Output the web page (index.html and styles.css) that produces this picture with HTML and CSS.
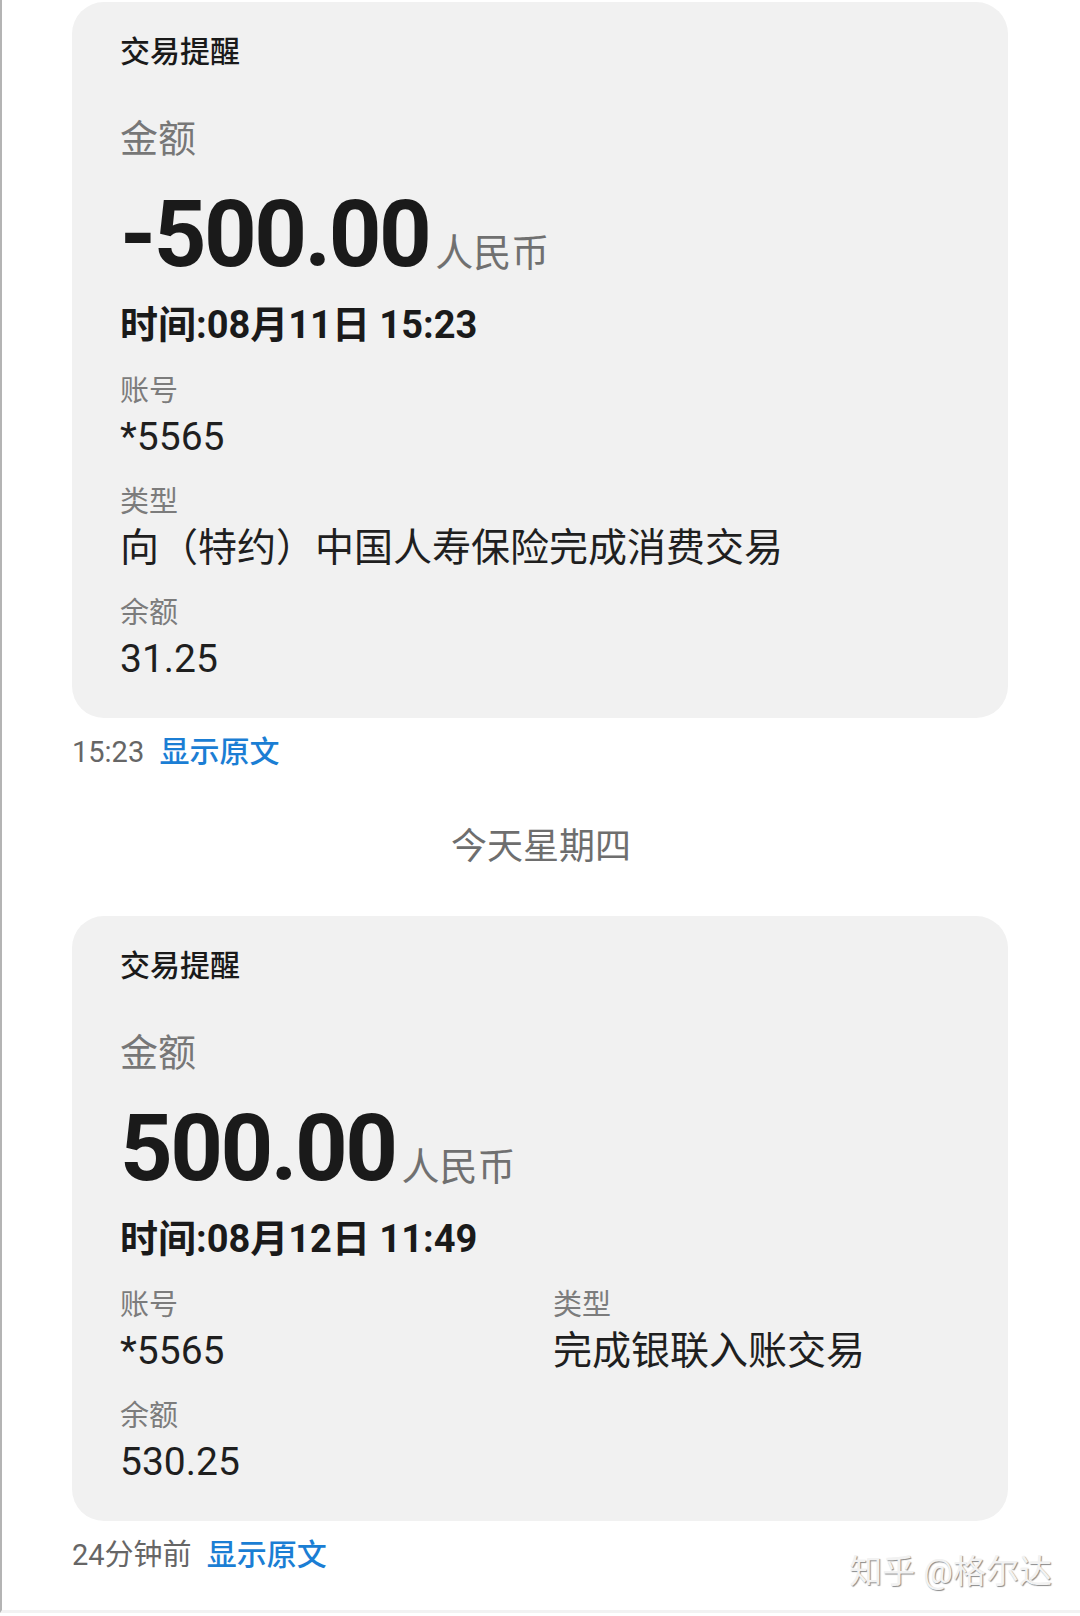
FILE: index.html
```html
<!DOCTYPE html>
<html lang="zh-CN">
<head>
    <meta charset="UTF-8">
    <meta name="viewport" content="width=device-width, initial-scale=1.0">
    <title>交易提醒</title>
    <link rel="stylesheet" href="styles.css">
</head>
<body>
    <div class="page">
        <div class="card">
            <div class="card-title">交易提醒</div>
            <div class="amount-label">金额</div>
            <div class="amount"><span class="num">-500.00</span><span class="cur">人民币</span></div>
            <div class="time">时间:08月11日 15:23</div>
            <div class="field">
                <div class="label">账号</div>
                <div class="value">*5565</div>
            </div>
            <div class="field">
                <div class="label">类型</div>
                <div class="value">向（特约）中国人寿保险完成消费交易</div>
            </div>
            <div class="field">
                <div class="label">余额</div>
                <div class="value">31.25</div>
            </div>
        </div>
        <div class="meta">
            <span class="meta-time">15:23</span>
            <a class="meta-link" href="#">显示原文</a>
        </div>

        <div class="day">今天星期四</div>

        <div class="card">
            <div class="card-title">交易提醒</div>
            <div class="amount-label">金额</div>
            <div class="amount"><span class="num">500.00</span><span class="cur">人民币</span></div>
            <div class="time">时间:08月12日 11:49</div>
            <div class="field-grid">
                <div class="field">
                    <div class="label">账号</div>
                    <div class="value">*5565</div>
                </div>
                <div class="field">
                    <div class="label">类型</div>
                    <div class="value">完成银联入账交易</div>
                </div>
                <div class="field">
                    <div class="label">余额</div>
                    <div class="value">530.25</div>
                </div>
            </div>
        </div>
        <div class="meta">
            <span class="meta-time">24分钟前</span>
            <a class="meta-link" href="#">显示原文</a>
        </div>

        <div class="watermark">知乎 @格尔达</div>
    </div>
</body>
</html>
```

FILE: styles.css
```css
body {
    margin: 0;
    padding: 0;
    background-color: #ffffff;
    font-family: Roboto, "Noto Sans CJK SC", sans-serif;
    color: #1c1c1c;
}

.page {
    position: relative;
    height: 1613px;
    padding-top: 2px;
    box-sizing: border-box;
    border-left: 2px solid #b4b4b4;
    border-bottom: 3px solid #f2f2f2;
    overflow: hidden;
}

.card {
    width: 936px;
    margin-left: 70px;
    padding: 30px 48px 35px 48px;
    box-sizing: border-box;
    background-color: #f1f1f1;
    border-radius: 32px;
}

.card-title {
    font-size: 30px;
    line-height: 40px;
    font-weight: 500;
    color: #1a1a1a;
}

.amount-label {
    margin-top: 42px;
    font-size: 38px;
    line-height: 50px;
    color: #777777;
}

.amount {
    margin-top: 16px;
    height: 110px;
    font-size: 92px;
    line-height: 110px;
    white-space: nowrap;
}

.amount .num {
    font-weight: bold;
    color: #1a1a1a;
    letter-spacing: -2.5px;
}

.amount .cur {
    margin-left: 6px;
    font-size: 38px;
    line-height: 1;
    color: #707070;
}

.time {
    margin-top: 10px;
    font-size: 38px;
    line-height: 50px;
    font-weight: bold;
    color: #1a1a1a;
}

.field {
    margin-top: 21px;
}

.label {
    font-size: 29px;
    line-height: 40px;
    color: #7c7c7c;
}

.value {
    margin-top: 2px;
    font-size: 39px;
    line-height: 48px;
    color: #1f1f1f;
}

.field-grid {
    display: grid;
    grid-template-columns: 433px 1fr;
}

.meta {
    margin-top: 14px;
    margin-left: 70px;
    font-size: 29px;
    line-height: 40px;
}

.meta-time {
    color: #666666;
}

.meta-link {
    margin-left: 8px;
    font-size: 30px;
    color: #1b7ed4;
    font-weight: 500;
    text-decoration: none;
}

.day {
    margin-top: 50px;
    margin-bottom: 44px;
    text-align: center;
    font-size: 36px;
    line-height: 50px;
    color: #6e6e6e;
}

.watermark {
    position: absolute;
    right: 28px;
    bottom: 18px;
    font-size: 33px;
    line-height: 40px;
    color: #f2f2f2;
    text-shadow: 1px 1px 1px #8a8a8a;
}
```
